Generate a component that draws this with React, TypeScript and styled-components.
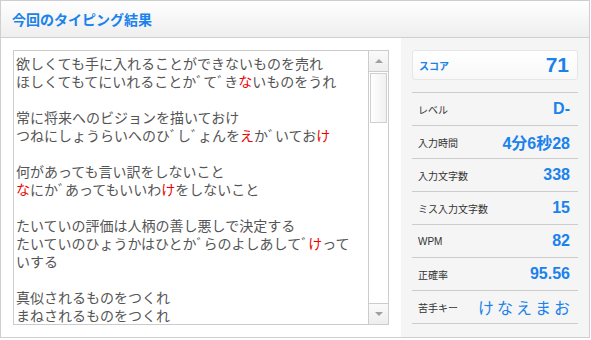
import React from 'react';
import styled, { createGlobalStyle } from 'styled-components';

const GlobalStyle = createGlobalStyle`
  body {
    margin: 0;
    background: #fff;
    font-family: "Liberation Sans", "Noto Sans CJK JP", sans-serif;
  }
`;

type Part = string | { miss: string };

// each entry is one line of the result text, null is an empty line
const lines: (Part[] | null)[] = [
  ['欲しくても手に入れることができないものを売れ'],
  ['ほしくてもてにいれることかﾞてﾞき', { miss: 'な' }, 'いものをうれ'],
  null,
  ['常に将来へのビジョンを描いておけ'],
  ['つねにしょうらいへのひﾞしﾞょんを', { miss: 'え' }, 'かﾞいてお', { miss: 'け' }],
  null,
  ['何があっても言い訳をしないこと'],
  [{ miss: 'な' }, 'にかﾞあってもいいわ', { miss: 'け' }, 'をしないこと'],
  null,
  ['たいていの評価は人柄の善し悪しで決定する'],
  ['たいていのひょうかはひとかﾞらのよしあしてﾞ', { miss: 'け' }, 'って'],
  ['いする'],
  null,
  ['真似されるものをつくれ'],
  ['まねされるものをつくれ'],
];

const stats = [
  { label: 'レベル', value: 'D-' },
  { label: '入力時間', value: '4分6秒28' },
  { label: '入力文字数', value: '338' },
  { label: 'ミス入力文字数', value: '15' },
  { label: 'WPM', value: '82' },
  { label: '正確率', value: '95.56' },
];

const App: React.FC = () => {
  return (
    <>
      <GlobalStyle />
      <Panel>
        <Header>
          <Title>今回のタイピング結果</Title>
        </Header>
        <Body>
          <TextBox>
            <TextContent>
              {lines.map((line, i) => (
                <Line key={i}>
                  {line === null
                    ? '\u00a0'
                    : line.map((p, j) =>
                        typeof p === 'string' ? p : <Miss key={j}>{p.miss}</Miss>
                      )}
                </Line>
              ))}
            </TextContent>
            <ScrollBar>
              <ScrollButton>
                <Arrow $up />
              </ScrollButton>
              <Thumb />
              <Track />
              <ScrollButton $bottom>
                <Arrow />
              </ScrollButton>
            </ScrollBar>
          </TextBox>
          <Side>
            <ScoreCard>
              <ScoreLabel>スコア</ScoreLabel>
              <ScoreValue>71</ScoreValue>
            </ScoreCard>
            <StatList>
              {stats.map((s) => (
                <StatRow key={s.label}>
                  <StatLabel>{s.label}</StatLabel>
                  <StatValue>{s.value}</StatValue>
                </StatRow>
              ))}
              <StatRow>
                <StatLabel>苦手キー</StatLabel>
                <WeakKeys>けなえまお</WeakKeys>
              </StatRow>
            </StatList>
          </Side>
        </Body>
      </Panel>
    </>
  );
};

const Panel = styled.div`
  width: 590px;
  height: 338px;
  box-sizing: border-box;
  border: 1px solid #cfcfcf;
  display: flex;
  flex-direction: column;
`;

const Header = styled.div`
  height: 37px;
  border-bottom: 1px solid #cfcfcf;
  background: linear-gradient(#ffffff, #eeeeee);
  display: flex;
  align-items: center;
  padding-left: 11px;
`;

const Title = styled.h1`
  margin: 0;
  font-family: "Noto Sans CJK JP", sans-serif;
  font-size: 14px;
  font-weight: bold;
  color: #1a82ec;
`;

const Body = styled.div`
  flex: 1;
  display: flex;
  padding-left: 12px;
  gap: 12px;
`;

const TextBox = styled.div`
  margin: 12px 0;
  width: 376px;
  box-sizing: border-box;
  border: 1px solid #cccccc;
  display: flex;
  background: #fff;
`;

const TextContent = styled.div`
  flex: 1;
  overflow: hidden;
  padding: 3px 0 0 2px;
  font-family: "Noto Sans CJK JP", sans-serif;
  font-size: 14px;
  line-height: 18px;
  color: #555555;
`;

const Line = styled.div`
  white-space: nowrap;
  height: 18px;
`;

const Miss = styled.span`
  color: #ee0000;
`;

const ScrollBar = styled.div`
  width: 19px;
  border-left: 1px solid #cccccc;
  display: flex;
  flex-direction: column;
  background: #fff;
`;

const ScrollButton = styled.div<{ $bottom?: boolean }>`
  height: 20px;
  display: flex;
  align-items: center;
  justify-content: center;
  background: linear-gradient(#fafafa, #eeeeee);
  border-bottom: ${(p) => (p.$bottom ? 'none' : '1px solid #cccccc')};
  border-top: ${(p) => (p.$bottom ? '1px solid #cccccc' : 'none')};
`;

const Arrow = styled.div<{ $up?: boolean }>`
  width: 0;
  height: 0;
  border-left: 4px solid transparent;
  border-right: 4px solid transparent;
  border-bottom: ${(p) => (p.$up ? '4px solid #a0a0a0' : 'none')};
  border-top: ${(p) => (p.$up ? 'none' : '4px solid #a0a0a0')};
`;

const Thumb = styled.div`
  margin: 1px 1px 0;
  height: 48px;
  border: 1px solid #d0d0d0;
  background: linear-gradient(90deg, #ffffff, #f0f0f0);
`;

const Track = styled.div`
  flex: 1;
`;

const Side = styled.div`
  width: 188px;
  background: #f5f5f5;
  padding: 12px 11px 0 11px;
  box-sizing: border-box;
`;

const ScoreCard = styled.div`
  height: 30px;
  box-sizing: border-box;
  border: 1px solid #e6e6e6;
  border-radius: 3px;
  background: linear-gradient(#ffffff, #f8f8f8);
  display: flex;
  align-items: center;
  justify-content: space-between;
  padding: 0 8px 0 6px;
  margin-bottom: 12px;
`;

const ScoreLabel = styled.span`
  font-family: "Noto Sans CJK JP", sans-serif;
  font-size: 10px;
  font-weight: bold;
  color: #1a82ec;
`;

const ScoreValue = styled.span`
  font-family: "Liberation Sans", sans-serif;
  font-size: 21px;
  font-weight: bold;
  color: #1a82ec;
`;

const StatList = styled.div`
  border-top: 1px solid #cccccc;
`;

const StatRow = styled.div`
  height: 32px;
  border-bottom: 1px solid #cccccc;
  display: flex;
  align-items: center;
  justify-content: space-between;
  padding: 0 8px 0 6px;
`;

const StatLabel = styled.span`
  font-family: "Liberation Sans", "Noto Sans CJK JP", sans-serif;
  font-size: 10px;
  color: #333333;
`;

const StatValue = styled.span`
  font-family: "Liberation Sans", "Noto Sans CJK JP", sans-serif;
  font-size: 16px;
  font-weight: bold;
  color: #1a82ec;
`;

const WeakKeys = styled.span`
  font-family: "Noto Sans CJK JP", sans-serif;
  font-size: 16px;
  letter-spacing: 3px;
  margin-right: -3px;
  color: #1a82ec;
`;

export default App;
